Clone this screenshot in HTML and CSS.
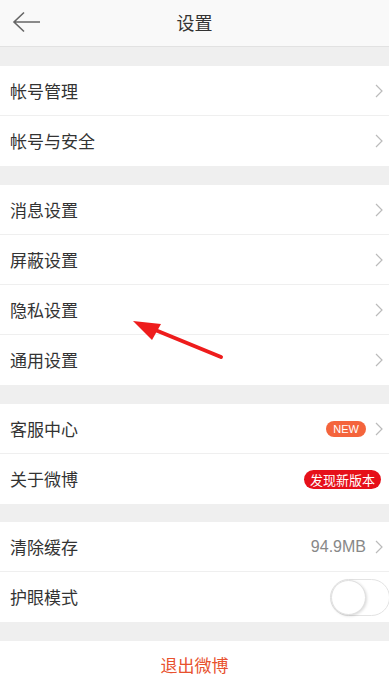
FILE: index.html
```html
<!DOCTYPE html>
<html lang="zh">
<head>
<meta charset="utf-8">
<link rel="stylesheet" href="styles.css">
</head>
<body>
<div class="page">
  <header class="topbar">
    <svg class="back" width="30" height="22" viewBox="0 0 30 22"><path d="M28 11H2M12 1.5L2 11l10 9.5" fill="none" stroke="#666" stroke-width="1.6"/></svg>
    <div class="title">设置</div>
  </header>
  <div class="gap"></div>
  <div class="group">
    <div class="row"><span class="label">帐号管理</span><span class="right"><svg class="chev" width="8" height="14" viewBox="0 0 8 14"><path d="M1 1l6 6-6 6" fill="none" stroke="#bbb" stroke-width="1.2"/></svg></span></div>
    <div class="row"><span class="label">帐号与安全</span><span class="right"><svg class="chev" width="8" height="14" viewBox="0 0 8 14"><path d="M1 1l6 6-6 6" fill="none" stroke="#bbb" stroke-width="1.2"/></svg></span></div>
  </div>
  <div class="gap"></div>
  <div class="group">
    <div class="row"><span class="label">消息设置</span><span class="right"><svg class="chev" width="8" height="14" viewBox="0 0 8 14"><path d="M1 1l6 6-6 6" fill="none" stroke="#bbb" stroke-width="1.2"/></svg></span></div>
    <div class="row"><span class="label">屏蔽设置</span><span class="right"><svg class="chev" width="8" height="14" viewBox="0 0 8 14"><path d="M1 1l6 6-6 6" fill="none" stroke="#bbb" stroke-width="1.2"/></svg></span></div>
    <div class="row"><span class="label">隐私设置</span><span class="right"><svg class="chev" width="8" height="14" viewBox="0 0 8 14"><path d="M1 1l6 6-6 6" fill="none" stroke="#bbb" stroke-width="1.2"/></svg></span></div>
    <div class="row"><span class="label">通用设置</span><span class="right"><svg class="chev" width="8" height="14" viewBox="0 0 8 14"><path d="M1 1l6 6-6 6" fill="none" stroke="#bbb" stroke-width="1.2"/></svg></span></div>
  </div>
  <div class="gap"></div>
  <div class="group">
    <div class="row"><span class="label">客服中心</span><span class="right"><span class="badge-new">NEW</span><svg class="chev" width="8" height="14" viewBox="0 0 8 14"><path d="M1 1l6 6-6 6" fill="none" stroke="#bbb" stroke-width="1.2"/></svg></span></div>
    <div class="row"><span class="label">关于微博</span><span class="right"><span class="badge-ver">发现新版本</span></span></div>
  </div>
  <div class="gap short"></div>
  <div class="group">
    <div class="row"><span class="label">清除缓存</span><span class="right"><span class="value">94.9MB</span><svg class="chev" width="8" height="14" viewBox="0 0 8 14"><path d="M1 1l6 6-6 6" fill="none" stroke="#bbb" stroke-width="1.2"/></svg></span></div>
    <div class="row"><span class="label">护眼模式</span><span class="right"><span class="toggle"><span class="knob"></span></span></span></div>
  </div>
  <div class="gap"></div>
  <div class="logout">退出微博</div>
  <svg class="annot" width="389" height="685" viewBox="0 0 389 685"><line x1="221" y1="357" x2="148" y2="327" stroke="#ee1c1c" stroke-width="4" stroke-linecap="round"/><polygon points="133,321 161,324 152,340" fill="#ee1c1c"/></svg>
</div>
</body>
</html>
```
FILE: styles.css
```css
* { box-sizing: border-box; }
html, body { margin: 0; padding: 0; }
body {
  font-family: "Noto Sans CJK SC", "Noto Sans", sans-serif;
  background: #fff;
  color: #333;
}
.page {
  position: relative;
  width: 389px;
  height: 685px;
  overflow: hidden;
  background: #fff;
}
.topbar {
  position: relative;
  height: 47px;
  background: #f9f9f9;
  border-bottom: 1px solid #e2e2e2;
  display: flex;
  align-items: center;
  justify-content: center;
}
.back {
  position: absolute;
  left: 12px;
  top: 11px;
}
.title {
  font-size: 18px;
  color: #333;
  margin-top: -3px;
}
.gap {
  height: 19px;
  background: #efefef;
}
.gap.short { height: 18px; }
.group { background: #fff; }
.row {
  height: 50px;
  display: flex;
  align-items: center;
  justify-content: space-between;
  padding: 0 6px 0 10px;
  border-bottom: 1px solid #efefef;
}
.row:last-child { border-bottom: none; }
.label {
  font-size: 17px;
  color: #333;
  margin-top: -1px;
}
.right {
  display: flex;
  align-items: center;
  gap: 9px;
}
.chev { display: block; }
.badge-new {
  background: #f4643c;
  color: #fff;
  font-family: "Liberation Sans", Arial, sans-serif;
  font-size: 11px;
  line-height: 16px;
  height: 16px;
  padding: 0 7px;
  border-radius: 8px;
}
.badge-ver {
  background: #e6101a;
  color: #fff;
  font-size: 13px;
  line-height: 19px;
  height: 19px;
  padding: 0 6px;
  border-radius: 10px;
  margin-right: 2px;
}
.value {
  font-family: "Liberation Sans", Arial, sans-serif;
  font-size: 16px;
  color: #888;
}
.toggle {
  position: relative;
  display: block;
  width: 60px;
  height: 37px;
  border-radius: 19px;
  border: 1px solid #e3e3e3;
  background: #fff;
  margin-right: -7px;
}
.knob {
  position: absolute;
  left: 0;
  top: 0;
  width: 35px;
  height: 35px;
  border-radius: 50%;
  background: #fff;
  border: 1px solid #e0e0e0;
  box-shadow: 1px 1px 3px rgba(0,0,0,0.15);
}
.logout {
  height: 45px;
  display: flex;
  align-items: center;
  justify-content: center;
  color: #e8512e;
  font-size: 17px;
  margin-top: 1px;
}
.annot {
  position: absolute;
  left: 0;
  top: 0;
  pointer-events: none;
}
```
